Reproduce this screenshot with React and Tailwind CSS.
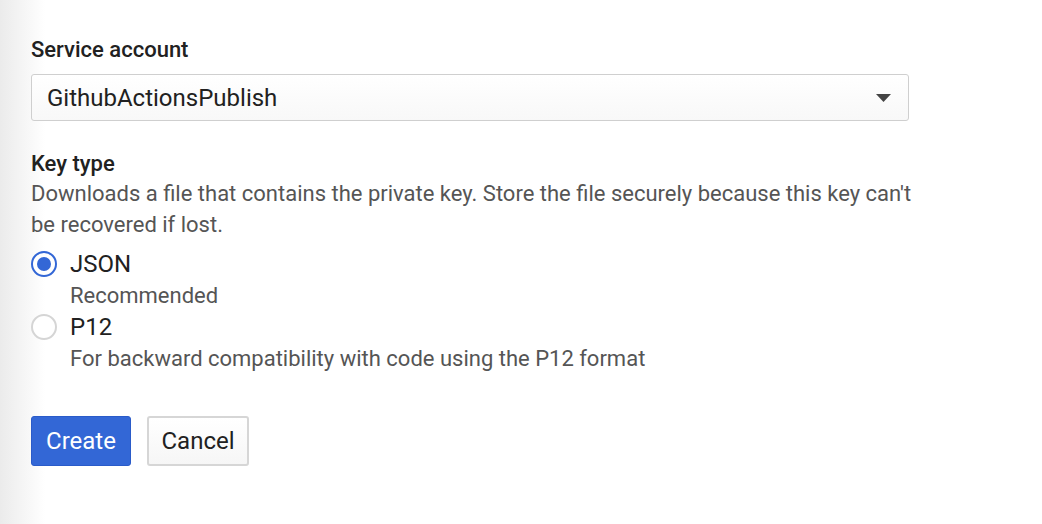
import React, { useState } from 'react';

const Radio = ({ checked, onClick }) => (
  <button
    type="button"
    onClick={onClick}
    className={
      'flex h-[26px] w-[26px] shrink-0 items-center justify-center rounded-full border-2 bg-white ' +
      (checked ? 'border-[#3367d6]' : 'border-[#d5d5d5]')
    }
  >
    {checked && <span className="block h-[14px] w-[14px] rounded-full bg-[#3367d6]" />}
  </button>
);

const App = () => {
  const [keyType, setKeyType] = useState('json');

  return (
    <div
      className="min-h-[524px] w-full bg-[linear-gradient(to_right,#ebebeb,#ffffff_45px)] pl-[31px] pt-[37px] text-[#212121]"
      style={{ fontFamily: 'Roboto, "Noto Sans", sans-serif' }}
    >
      <div className="w-[878px]">
        <div className="text-[22px] font-medium leading-[26px]">Service account</div>
        <div className="mt-[11px] flex h-[47px] items-center justify-between rounded-[3px] border border-[#cfcfcf] bg-[linear-gradient(to_bottom,#ffffff,#f8f8f8)] pl-[15px] pr-[17px]">
          <span className="text-[24px]">GithubActionsPublish</span>
          <svg width="15" height="8" viewBox="0 0 15 8">
            <path d="M0 0 L15 0 L7.5 8 Z" fill="#444" />
          </svg>
        </div>

        <div className="mt-[30px] text-[22px] font-medium leading-[26px]">Key type</div>
        <p className="mt-[1px] w-[890px] text-[22px] leading-[31px] text-[#555]">
          Downloads a file that contains the private key. Store the file securely because this key can't be recovered if lost.
        </p>

        <div className="mt-[9px] flex flex-col gap-[1px]">
          <div className="flex items-start gap-[13px]">
            <div className="pt-[2px]">
              <Radio checked={keyType === 'json'} onClick={() => setKeyType('json')} />
            </div>
            <div>
              <div className="text-[24px] leading-[31px]">JSON</div>
              <div className="text-[22px] leading-[31px] text-[#555]">Recommended</div>
            </div>
          </div>
          <div className="flex items-start gap-[13px]">
            <div className="pt-[2px]">
              <Radio checked={keyType === 'p12'} onClick={() => setKeyType('p12')} />
            </div>
            <div>
              <div className="text-[24px] leading-[31px]">P12</div>
              <div className="text-[22px] leading-[31px] text-[#555]">
                For backward compatibility with code using the P12 format
              </div>
            </div>
          </div>
        </div>

        <div className="mt-[42px] flex gap-[16px]">
          <button className="h-[50px] w-[100px] rounded-[3px] border border-[#2a5bc9] bg-[#3367d6] text-[24px] text-white">
            Create
          </button>
          <button className="h-[50px] w-[102px] rounded-[3px] border-2 border-[#d6d6d6] bg-[linear-gradient(to_bottom,#ffffff,#f6f6f6)] text-[24px] text-[#212121]">
            Cancel
          </button>
        </div>
      </div>
    </div>
  );
};

export default App;
